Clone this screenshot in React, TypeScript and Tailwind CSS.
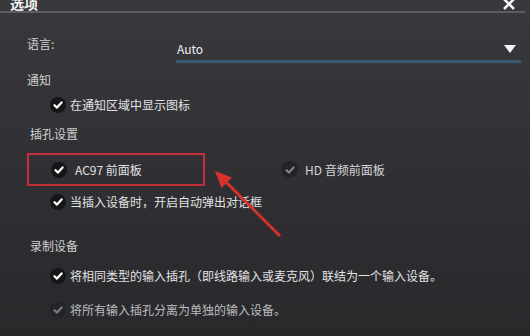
import React from "react";

function Check({ dim = false }: { dim?: boolean }) {
  return (
    <span
      className={`flex items-center justify-center w-[16px] h-[16px] rounded-full shrink-0 ${
        dim ? "bg-[#242428]" : "bg-[#161619]"
      }`}
    >
      <svg width="10" height="10" viewBox="0 0 10 10">
        <path
          d="M1.5 5.2 L4 7.6 L8.6 2.4"
          fill="none"
          stroke={dim ? "#7a7a7e" : "#ffffff"}
          strokeWidth="2.2"
          strokeLinecap="round"
          strokeLinejoin="round"
        />
      </svg>
    </span>
  );
}

function CheckRow({ text, dim = false, className = "" }: { text: string; dim?: boolean; className?: string }) {
  return (
    <div className={`flex items-center h-[20px] pl-[50px] gap-[4px] ${className}`}>
      <Check dim={dim} />
      <span className={`text-[12px] leading-[20px] ${dim ? "text-[#bdbdc0]" : "text-[#e2e2e4]"}`}>{text}</span>
    </div>
  );
}

export default function App() {
  return (
    <div
      className="relative w-[530px] h-[336px] overflow-hidden bg-gradient-to-b from-[#38383d] to-[#29292c]"
      style={{ fontFamily: '"Noto Sans CJK SC", "Noto Sans", sans-serif' }}
    >
      {/* header */}
      <div className="flex justify-between items-start h-[11px] overflow-hidden px-[10px]">
        <span className="text-[14px] font-bold leading-[14px] -mt-[4px] text-[#f0f0f0]">选项</span>
        <svg width="14" height="11" viewBox="0 0 14 11" className="mr-[4px] -mt-[1px]">
          <path d="M2 0 L12 10 M12 0 L2 10" stroke="#f2f2f2" strokeWidth="2.6" />
        </svg>
      </div>
      <div className="h-[2px] bg-[#5c5c60] mr-[5px]" />

      {/* language */}
      <div className="flex items-start mt-[21px]">
        <span className="w-[176px] pl-[27px] text-[12px] leading-[20px] text-[#d0d0d2]">语言:</span>
        <div className="flex-1 mr-[9px] h-[29px] border-b-[3px] border-[#3a5a70] flex items-start justify-between pt-[5px] pl-[1px]">
          <span className="text-[12px] leading-[20px] text-[#f0f0f0]">Auto</span>
          <svg width="12" height="9" viewBox="0 0 12 9" className="mt-[6px] mr-[5px]">
            <path d="M0 0 L12 0 L6 8 Z" fill="#f4f4f4" />
          </svg>
        </div>
      </div>

      <div className="mt-[7px] h-[20px] pl-[27px] text-[12px] leading-[20px] text-[#d0d0d2]">通知</div>
      <CheckRow text="在通知区域中显示图标" className="mt-[5px]" />

      <div className="mt-[9px] h-[20px] pl-[30px] text-[12px] leading-[20px] text-[#d0d0d2]">插孔设置</div>

      <div className="flex items-center mt-[9px] h-[33px]">
        <div className="ml-[27px] w-[178px] h-[33px] border-2 border-[#c4303a] flex items-center pl-[22px] gap-[8px]">
          <Check />
          <span className="text-[12px] leading-[20px] text-[#e2e2e4]">AC97 前面板</span>
        </div>
        <div className="flex items-center ml-[76px] gap-[7px]">
          <span className="flex items-center justify-center w-[17px] h-[17px] rounded-full bg-[#242427]">
            <svg width="10" height="10" viewBox="0 0 10 10">
              <path d="M1.5 5.2 L4 7.6 L8.6 2.4" fill="none" stroke="#8a8a8e" strokeWidth="2" strokeLinecap="round" strokeLinejoin="round" />
            </svg>
          </span>
          <span className="text-[12px] leading-[20px] text-[#d6d6d8]">HD 音频前面板</span>
        </div>
      </div>

      <CheckRow text="当插入设备时，开启自动弹出对话框" className="mt-[6px]" />

      <div className="mt-[24px] h-[20px] pl-[30px] text-[12px] leading-[20px] text-[#d0d0d2]">录制设备</div>
      <CheckRow text="将相同类型的输入插孔（即线路输入或麦克风）联结为一个输入设备。" className="mt-[10px]" />
      <CheckRow text="将所有输入插孔分离为单独的输入设备。" dim className="mt-[14px]" />

      {/* annotation arrow */}
      <svg className="absolute left-0 top-0 pointer-events-none" width="530" height="336" viewBox="0 0 530 336">
        <line x1="224" y1="180" x2="280" y2="236" stroke="#d8312c" strokeWidth="3" />
        <polygon points="215,171 232,177.5 221.5,188" fill="#d8312c" />
      </svg>
    </div>
  );
}
